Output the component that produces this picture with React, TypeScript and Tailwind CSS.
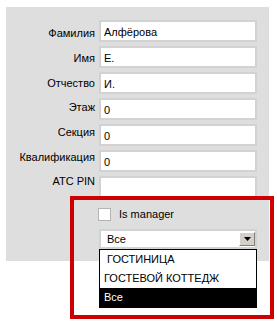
import React from "react";

const rows: { label: string; value: string; lc: string }[] = [
  { label: "Фамилия", value: "Алфёрова", lc: "mt-[6px]" },
  { label: "Имя", value: "Е.", lc: "mt-[5px]" },
  { label: "Отчество", value: "И.", lc: "mt-[4px]" },
  { label: "Этаж", value: "0", lc: "mt-[2px]" },
  { label: "Секция", value: "0", lc: "mt-[1px]" },
  { label: "Квалификация", value: "0", lc: "mt-0" },
  { label: "ATC PIN", value: "", lc: "-mt-[2px]" },
];

export default function App() {
  return (
    <div
      className="relative w-[277px] h-[328px] bg-white text-[11px] text-black"
      style={{ fontFamily: '"Liberation Sans", Arial, sans-serif' }}
    >
      <div className="absolute left-0 top-0 w-full h-full pl-[6px] pt-[7px]">
        <div className="w-[263px] h-[254px] bg-[#dedede] flex flex-col pt-[13px] pr-[12px]">
          <div className="flex flex-col gap-[4px]">
            {rows.map((r) => (
              <div key={r.label} className="flex h-[22px] gap-[4px]">
                <div className={`w-[89px] text-right leading-[14px] ${r.lc}`}>{r.label}</div>
                <div className="w-[158px] h-[22px] bg-white border-2 border-[#d2d2d2] pl-[3px] pt-[3px] leading-[14px]">
                  {r.value}
                </div>
              </div>
            ))}
          </div>
          <div className="flex items-center mt-[9px] pl-[92px] gap-[8px]">
            <div className="w-[13px] h-[13px] bg-white border border-[#b4b4b4]" />
            <span className="leading-[14px]">Is manager</span>
          </div>
          <div className="relative ml-[93px] mt-[8px] w-[158px] h-[20px] bg-white border-2 border-[#d2d2d2] flex items-center">
            <span className="pl-[6px] flex-1 leading-[14px]">Все</span>
            <div className="mr-[0px] w-[16px] h-[14px] bg-[#d4d0c8] border border-t-white border-l-white border-r-[#808080] border-b-[#808080] flex items-center justify-center">
              <svg width="7" height="4" viewBox="0 0 7 4">
                <path d="M0 0h7L3.5 4z" fill="#000" />
              </svg>
            </div>
            <div className="absolute left-[-2px] top-[18px] w-[158px] h-[59px] bg-white border border-black flex flex-col">
              <div className="h-[19px] flex items-center pl-[4px] whitespace-pre">{" ГОСТИНИЦА"}</div>
              <div className="h-[19px] flex items-center pl-[4px]">ГОСТЕВОЙ КОТТЕДЖ</div>
              <div className="h-[19px] flex items-center pl-[4px] bg-black text-white">Все</div>
            </div>
          </div>
        </div>
      </div>
      <div className="absolute left-[70px] top-[196px] w-[204px] h-[123px] border-4 border-[#cc0000] pointer-events-none" />
    </div>
  );
}
